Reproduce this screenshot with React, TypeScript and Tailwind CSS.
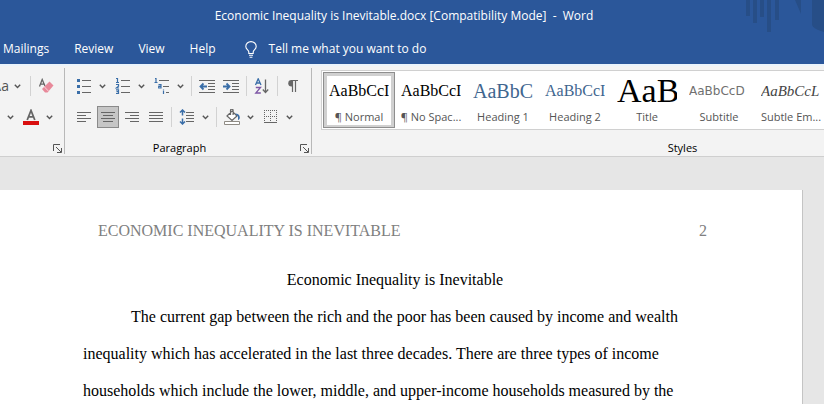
import type { ReactNode } from "react";

const INK = "#666666";
const BLUE = "#3a6ea8";

function Chevron({ label }: { label: string }) {
  return (
    <button type="button" aria-label={label} className="flex h-[22px] w-3 shrink-0 items-center justify-center">
      <svg width="7" height="5" viewBox="0 0 7 5" fill="none" stroke="#555" strokeWidth="1.4">
        <path d="M0.8 0.8 3.5 3.5 6.2 0.8" />
      </svg>
    </button>
  );
}

function Tool({ label, pressed = false, children }: { label: string; pressed?: boolean; children: ReactNode }) {
  return (
    <button
      type="button"
      aria-label={label}
      aria-pressed={pressed}
      className={
        pressed
          ? "mx-px flex h-[22px] w-[22px] shrink-0 items-center justify-center border border-[#8a8a8a] bg-[#c6c6c6]"
          : "flex h-[22px] w-6 shrink-0 items-center justify-center"
      }
    >
      {children}
    </button>
  );
}

function Divider() {
  return <span className="mx-[3px] h-5 w-px shrink-0 bg-[#d2d2d2]" />;
}

function Icon({ children, w = 16 }: { children: ReactNode; w?: number }) {
  return (
    <svg width={w} height="16" viewBox={`0 0 ${w} 16`} fill="none" stroke={INK} strokeWidth="1" className="shrink-0">
      {children}
    </svg>
  );
}

function Launcher({ label }: { label: string }) {
  return (
    <button type="button" aria-label={label} className="flex h-3 w-3 items-center justify-center">
      <svg width="9" height="9" viewBox="0 0 9 9" fill="none" stroke="#555">
        <path d="M0.5 7V0.5H7M3 3l5 5M8.5 4v4.5H4" />
      </svg>
    </button>
  );
}

function AlignIcon({ d, w = 14 }: { d: string; w?: number }) {
  return (
    <svg width={w} height="12" viewBox="0 0 14 12" stroke={INK} fill="none">
      <path d={d} />
    </svg>
  );
}

function Bulb() {
  return (
    <svg width="12" height="17" viewBox="0 0 12 17" fill="none" stroke="#fff" strokeWidth="1.1">
      <path d="M3.8 12.5V11C3.8 9.2 0.8 8.4 0.8 5.4a5.2 4.8 0 0 1 10.4 0C11.2 8.4 8.2 9.2 8.2 11v1.5zM4 14.3h4M4.6 16.2h2.8" />
    </svg>
  );
}

const tabs = ["Mailings", "Review", "View", "Help"];

const styles = [
  { name: "¶ Normal", sample: "AaBbCcI", look: "font-['Liberation_Serif',serif] text-[16px] text-black" },
  { name: "¶ No Spac...", sample: "AaBbCcI", look: "font-['Liberation_Serif',serif] text-[16px] text-black" },
  { name: "Heading 1", sample: "AaBbC", look: "font-['Liberation_Serif',serif] text-[20px] text-[#3f668f]" },
  { name: "Heading 2", sample: "AaBbCcI", look: "font-['Liberation_Serif',serif] text-[16px] text-[#3f668f]" },
  { name: "Title", sample: "AaB", look: "font-['Liberation_Serif',serif] text-[34px] text-black" },
  { name: "Subtitle", sample: "AaBbCcD", look: "font-['DejaVu_Sans',sans-serif] text-[12px] text-[#707070]" },
  { name: "Subtle Em...", sample: "AaBbCcL", look: "font-['Liberation_Serif',serif] text-[15px] italic text-[#444]" },
];

export default function App() {
  return (
    <div className="flex h-screen flex-col overflow-hidden bg-[#e6e6e6] font-['Open_Sans',sans-serif] text-xs">
      <header className="relative shrink-0 bg-[#2b579a] text-white">
        <svg className="absolute top-0 right-0" width="80" height="34" viewBox="0 0 80 34" fill="#274e87">
          <path d="M2 0h4v16H2zM9 0h4v23H9zM16 0h4v17h-4zM23 0h4v32h-4zM31 0h4v20h-4zM51 0h6v14zM68 0h12v32c-6-2-12-4-12-8z" />
        </svg>
        <h1 className="flex h-8 items-center justify-center pr-4 whitespace-pre">
          {"Economic Inequality is Inevitable.docx [Compatibility Mode]  -  Word"}
        </h1>
        <nav className="flex h-8 items-center gap-[25px] pt-[2px] pl-[3px]">
          {tabs.map((t) => (
            <button type="button" key={t}>
              {t}
            </button>
          ))}
          <button type="button" className="flex items-center gap-3 pl-1">
            <Bulb />
            Tell me what you want to do
          </button>
        </nav>
      </header>

      <section className="flex h-[93px] shrink-0 border-t-2 border-b border-t-[#eaf3fb] border-b-[#cfcfcf] bg-[#f3f3f3] pt-[2px] pb-[2px] text-[#222]">
        <div className="flex w-[65px] shrink-0 flex-col border-r border-[#b8b8b8] pt-[7px]">
          <div className="flex h-[22px] items-center">
            <button type="button" className="flex w-[11px] justify-end overflow-hidden pr-[2px] text-sm text-[#555]">
              Aa
            </button>
            <span className="flex pr-1">
              <Chevron label="Change case options" />
            </span>
            <Divider />
            <Tool label="Clear formatting">
              <Icon>
                <path d="M1.5 8.5 4.2 1.5 7 8M2.4 6.2h3.8" strokeWidth="1.3" />
                <path d="M11.5 3.5 15.5 7.5 9.5 14.5H7L4 11z" fill="#e8899a" stroke="none" />
                <path d="m6.3 8.8 4.2 4.4" stroke="#f8d4da" />
              </Icon>
            </Tool>
          </div>
          <div className="mt-[9px] flex h-[22px] items-center pl-1">
            <span className="flex pr-[3px]">
              <Chevron label="Highlight options" />
            </span>
            <Tool label="Font color">
              <Icon>
                <path d="M4.2 11 8 1.5 11.8 11M5.5 7.8h5" strokeWidth="1.8" />
                <path d="M0 12h16v4H0z" fill="#d90f0f" stroke="none" />
              </Icon>
            </Tool>
            <Chevron label="Font color options" />
          </div>
          <div className="mt-auto flex justify-end pr-px">
            <Launcher label="Font settings" />
          </div>
        </div>

        <div className="flex w-[247px] shrink-0 flex-col border-r border-[#b8b8b8] pt-[7px]">
          <div className="flex h-[22px] items-center pl-[7px]">
            <div className="flex gap-[3px] pr-[2px]">
              <span className="flex">
                <Tool label="Bullets">
                  <Icon>
                    <path d="M6 2.5h9M6 8.5h9M6 14.5h9" />
                    <path d="M1 1h3v3H1zM1 7h3v3H1zM1 13h3v3H1z" fill={BLUE} stroke="none" />
                  </Icon>
                </Tool>
                <Chevron label="Bullet options" />
              </span>
              <span className="flex">
                <Tool label="Numbering">
                  <Icon>
                    <path d="M6 2.5h9M6 8.5h9M6 14.5h9" />
                    <path
                      d="M1 0.5h1.5v3.5M1 4.5h3M1 6.5h2.5v1.8L1.2 10H4M1 11.8h2.5v3.7H1M1.5 13.6h2"
                      stroke={BLUE}
                      strokeWidth="1.2"
                    />
                  </Icon>
                </Tool>
                <Chevron label="Numbering options" />
              </span>
              <span className="flex">
                <Tool label="Multilevel list">
                  <Icon>
                    <path d="M5 2.5h10M9 8.5h6M12 14.5h3" />
                    <path
                      d="M1 0.5h1v3.5M0.5 4.5h3M4.5 6.7H7V10H4.7V8.3H7M9.5 11.5v1M9.5 13v3"
                      stroke={BLUE}
                      strokeWidth="1.2"
                    />
                  </Icon>
                </Tool>
                <Chevron label="Multilevel options" />
              </span>
            </div>
            <Divider />
            <Tool label="Decrease indent">
              <Icon>
                <path d="M0 2.5h16M9 5.5h7M9 8.5h7M9 11.5h7M0 14.5h16" />
                <path d="M8 8.5H1.5M4.5 5.5l-3 3 3 3" stroke={BLUE} strokeWidth="1.8" />
              </Icon>
            </Tool>
            <Tool label="Increase indent">
              <Icon>
                <path d="M0 2.5h16M9 5.5h7M9 8.5h7M9 11.5h7M0 14.5h16" />
                <path d="M0 8.5h6.5M3.5 5.5l3 3-3 3" stroke={BLUE} strokeWidth="1.8" />
              </Icon>
            </Tool>
            <Divider />
            <Tool label="Sort">
              <Icon>
                <path d="M1.5 7 4.2 0.8 7 7M2.5 5h3.5" stroke={BLUE} strokeWidth="1.3" />
                <path d="M1.8 9.5h4.7L1.8 15h5" stroke="#7d56a5" strokeWidth="1.3" />
                <path d="M11.5 1.5v13M8.8 11.5l2.7 3 2.7-3" strokeWidth="1.3" />
              </Icon>
            </Tool>
            <Divider />
            <Tool label="Show paragraph marks">
              <Icon>
                <path d="M7.5 2.5V14M10.5 2.5V14M6 2.5h7" strokeWidth="1.2" />
                <path d="M8 2H6.5a3.2 3.2 0 0 0 0 6.5H8z" fill={INK} stroke="none" />
              </Icon>
            </Tool>
          </div>

          <div className="mt-[9px] flex h-[22px] items-center pl-[7px]">
            <Tool label="Align left">
              <AlignIcon d="M0 1.5h14M0 4.5h9M0 7.5h14M0 10.5h9" />
            </Tool>
            <Tool label="Center" pressed>
              <AlignIcon d="M0 1.5h14M2 4.5h10M0 7.5h14M2 10.5h10" />
            </Tool>
            <Tool label="Align right">
              <AlignIcon d="M0 1.5h14M5 4.5h9M0 7.5h14M5 10.5h9" />
            </Tool>
            <Tool label="Justify">
              <AlignIcon d="M0 1.5h14M0 4.5h14M0 7.5h14M0 10.5h14" />
            </Tool>
            <Divider />
            <Tool label="Line spacing">
              <Icon>
                <path d="M7 3.5h8M7 6.5h8M7 9.5h8M7 12.5h8" />
                <path d="M3.5 1v5.5M3.5 9.5V15M1 3.5l2.5-2.5L6 3.5M1 12.5 3.5 15 6 12.5" stroke={BLUE} strokeWidth="1.5" />
              </Icon>
            </Tool>
            <span className="flex pr-[2px]">
              <Chevron label="Line spacing options" />
            </span>
            <Divider />
            <div className="flex gap-[3px]">
              <span className="flex">
                <Tool label="Shading">
                  <Icon>
                    <path d="M3 7 8 2l5 5-5 4.5zM6.5 6V1.5a1.3 1.3 0 0 1 2.6 0V6" fill="#fff" strokeWidth="1.2" />
                    <path d="M11 4.5c3 0 4.8 1.5 4.8 4 0 1.2-.8 2.5-1.8 2.5V7.5z" fill={BLUE} stroke="none" />
                    <path d="M0.5 12.5h15v3h-15z" fill="#fff" stroke="#8f8b84" />
                  </Icon>
                </Tool>
                <Chevron label="Shading options" />
              </span>
              <span className="flex">
                <Tool label="Borders">
                  <svg width="14" height="14" viewBox="0 0 14 14" fill="none" stroke={INK}>
                    <path d="M0 0.5h13M0 6.5h13M0.5 0v12M6.5 0v12M12.5 0v12" strokeDasharray="1 1" />
                    <path d="M0 12.5h13" />
                  </svg>
                </Tool>
                <Chevron label="Border options" />
              </span>
            </div>
          </div>

          <div className="mt-auto flex items-center pr-px">
            <span className="flex-1 pr-1 text-center text-[11px] leading-3 text-black">Paragraph</span>
            <Launcher label="Paragraph settings" />
          </div>
        </div>

        <div className="flex min-w-0 flex-1 flex-col pt-[2px] pl-[9px]">
          <div className="flex h-[60px] overflow-hidden border-y border-l border-[#d0d0d0] bg-white py-px pl-px">
            {styles.map((s, i) => (
              <button
                type="button"
                key={s.name}
                className={
                  i === 0
                    ? "flex w-[72px] shrink-0 flex-col items-center border border-[#8e8e8e] bg-[#d0d0d0] p-[3px]"
                    : "flex w-[72px] shrink-0 flex-col items-center p-1"
                }
              >
                <span className="flex w-full flex-1 flex-col items-center bg-white pt-px">
                  <span className={`flex h-7 w-[60px] items-center overflow-hidden leading-none ${s.look}`}>
                    {s.sample}
                  </span>
                  <span className="pt-1 text-[11px] leading-4 whitespace-nowrap text-[#555]">{s.name}</span>
                </span>
              </button>
            ))}
          </div>
          <div className="mt-auto pl-[220px] text-center text-[11px] leading-3 text-black">Styles</div>
        </div>
      </section>

      <main className="mt-[33px] mr-[21px] flex-1 border-r border-[#c4c4c4] bg-white pr-[95px] pl-[83px] font-['Liberation_Serif',serif] text-base leading-[37px] text-black">
        <div className="flex justify-between pt-[22px] pl-[15px] text-[#808080]">
          <span>ECONOMIC INEQUALITY IS INEVITABLE</span>
          <span>2</span>
        </div>
        <h2 className="mt-3 text-center">Economic Inequality is Inevitable</h2>
        <p className="indent-12">
          The current gap between the rich and the poor has been caused by income and wealth inequality which has
          accelerated in the last three decades. There are three types of income households which include the lower,
          middle, and upper-income households measured by the
        </p>
      </main>
    </div>
  );
}
